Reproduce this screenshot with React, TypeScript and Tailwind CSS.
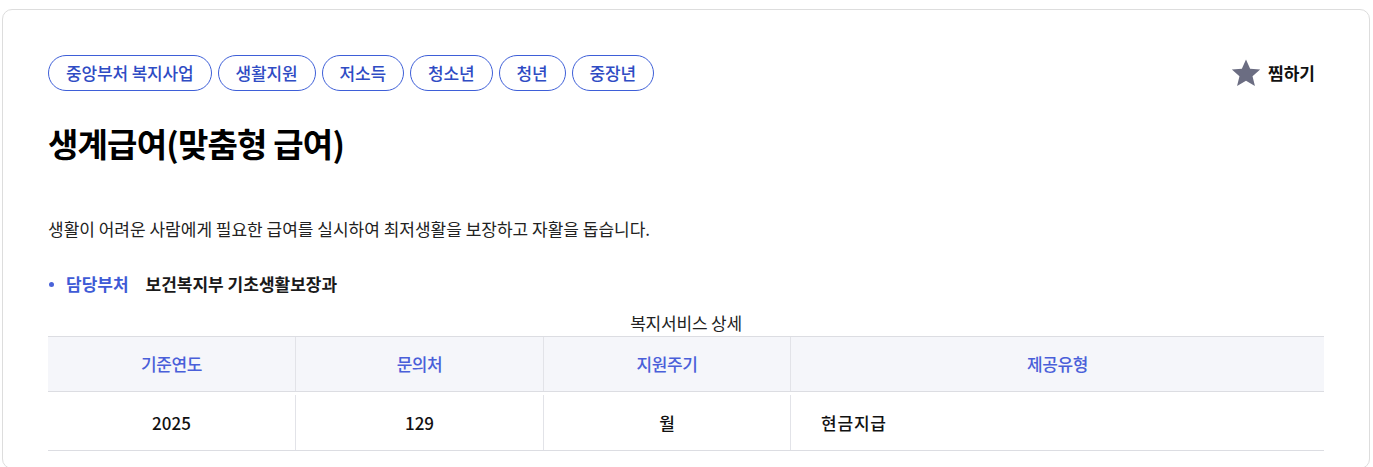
import React from "react";

const tags = ["중앙부처 복지사업", "생활지원", "저소득", "청소년", "청년", "중장년"];

export default function App() {
  const font = { fontFamily: '"Noto Sans CJK KR", "Noto Sans", sans-serif' };
  return (
    <div className="bg-white w-[1373px] h-[467px] overflow-hidden" style={font}>
      <div className="ml-[2px] mt-[9px] w-[1368px] h-[460px] border border-[#dddddd] rounded-[10px] bg-white pl-[45px] pr-[46px] pt-[45px]">
        <div className="flex items-center justify-between">
          <div className="flex gap-[6px]">
            {tags.map((t) => (
              <span
                key={t}
                className="h-[36px] px-[17px] flex items-center rounded-full border border-[#3e5fd8] text-[#2f4cc4] text-[17px] font-medium -tracking-[0.15px]"
              >
                {t}
              </span>
            ))}
          </div>
          <button className="flex items-center gap-[6px] mr-[8px] text-[#111] text-[17px] font-bold">
            <svg width="32" height="32" viewBox="0 0 24 24" fill="#6b6d82">
              <path d="M12 1.8l3.1 7 7.5.6-5.7 5 1.8 7.4L12 17.9l-6.7 3.9 1.8-7.4-5.7-5 7.5-.6z" />
            </svg>
            찜하기
          </button>
        </div>
        <h1 className="mt-[30px] text-[33px] leading-[44px] font-bold text-black tracking-[-0.8px]">
          생계급여(맞춤형 급여)
        </h1>
        <p className="mt-[52px] text-[17px] leading-[24px] text-[#222]">
          생활이 어려운 사람에게 필요한 급여를 실시하여 최저생활을 보장하고 자활을 돕습니다.
        </p>
        <div className="mt-[31px] flex items-center text-[17px] leading-[24px] font-bold">
          <span className="w-[5px] h-[5px] rounded-full bg-[#4a63d9] ml-[1px] mr-[12px]" />
          <span className="text-[#3f5bd6]">담당부처</span>
          <span className="ml-[17px] text-[#1a1a1a]">보건복지부 기초생활보장과</span>
        </div>
        <div className="mt-[14px] w-[1276px]">
          <div className="text-center text-[17px] leading-[26px] text-[#222] -tracking-[0.2px]">복지서비스 상세</div>
          <div className="grid grid-cols-[248px_248px_247px_1fr] border-t border-[#dcdde2] bg-[#f5f6fa] h-[55px] text-[17px] font-medium text-[#4a5fd9] -tracking-[0.4px]">
            <div className="flex items-center justify-center border-r border-[#e2e3e8]">기준연도</div>
            <div className="flex items-center justify-center border-r border-[#e2e3e8]">문의처</div>
            <div className="flex items-center justify-center border-r border-[#e2e3e8]">지원주기</div>
            <div className="flex items-center justify-center">제공유형</div>
          </div>
          <div className="border-t border-[#dcdde2] border-b pt-[3px] grid grid-cols-[248px_248px_247px_1fr] h-[60px] text-[17px] font-medium text-[#111]">
            <div className="flex items-center justify-center border-r border-[#e2e3e8]">2025</div>
            <div className="flex items-center justify-center border-r border-[#e2e3e8]">129</div>
            <div className="flex items-center justify-center border-r border-[#e2e3e8]">월</div>
            <div className="flex items-center pl-[30px] tracking-[0.8px]">현금지급</div>
          </div>
        </div>
      </div>
    </div>
  );
}
